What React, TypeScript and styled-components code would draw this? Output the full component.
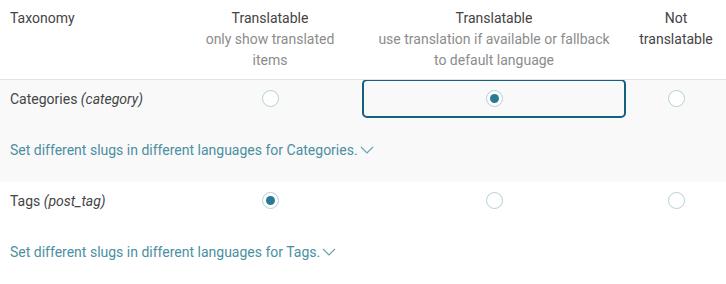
import styled, { createGlobalStyle } from 'styled-components';

const GlobalStyle = createGlobalStyle`
  html, body {
    margin: 0;
    padding: 0;
    background: #fff;
  }
  body {
    font-family: Roboto, "Liberation Sans", sans-serif;
    font-size: 14px;
    color: #444;
  }
`;

const Table = styled.table`
  width: 726px;
  border-collapse: collapse;
  table-layout: fixed;
`;

const Col = styled.col<{ $width: number }>`
  width: ${(p) => p.$width}px;
`;

const HeadCell = styled.th<{ $align?: 'left' | 'center' }>`
  padding: 8px 10px 8px;
  text-align: ${(p) => p.$align || 'center'};
  vertical-align: top;
  font-weight: 400;
  font-size: 14px;
  line-height: 21px;
  color: #444;
  border-bottom: 1px solid #e4e4e4;
`;

const Sub = styled.span`
  display: block;
  color: #8c8c8c;
`;

const Section = styled.tbody<{ $shaded?: boolean }>`
  background: ${(p) => (p.$shaded ? '#f9f9f9' : '#fff')};
`;

const NameCell = styled.td`
  height: 38px;
  padding: 0 10px;
  vertical-align: middle;
  line-height: 21px;
  color: #444;

  em {
    font-style: italic;
  }
`;

const RadioCell = styled.td`
  padding: 0;
  height: 38px;
  text-align: center;
  vertical-align: middle;
`;

const Focus = styled.label<{ $focused?: boolean }>`
  display: flex;
  align-items: center;
  justify-content: center;
  height: 39px;
  margin-top: -1px;
  box-sizing: border-box;
  border: 2px solid ${(p) => (p.$focused ? '#13607f' : 'transparent')};
  border-radius: 5px;
`;

const Radio = styled.span<{ $checked?: boolean }>`
  width: 17px;
  height: 17px;
  box-sizing: border-box;
  border-radius: 50%;
  border: 1px solid #b3cfd4;
  background: #fff;
  display: inline-flex;
  align-items: center;
  justify-content: center;

  &::after {
    content: '';
    width: 9px;
    height: 9px;
    border-radius: 50%;
    background: ${(p) => (p.$checked ? '#2b7a93' : 'transparent')};
  }
`;

const LinkCell = styled.td`
  height: 64px;
  padding: 0 10px;
  vertical-align: middle;
`;

const SlugLink = styled.a`
  color: #4a8fa2;
  text-decoration: none;
  font-size: 14px;
  line-height: 21px;
  display: inline-flex;
  align-items: center;
  gap: 2px;
`;

const Chevron = () => (
  <svg width="14" height="8" viewBox="0 0 14 8" fill="none">
    <path d="M1 1l6 6 6-6" stroke="#6aa2b2" strokeWidth="1.2" />
  </svg>
);

type Row = {
  label: string;
  slug: string;
  choice: number;
  focused?: number;
  shaded?: boolean;
};

const rows: Row[] = [
  { label: 'Categories', slug: 'category', choice: 1, focused: 1, shaded: true },
  { label: 'Tags', slug: 'post_tag', choice: 0 },
];

export default function App() {
  return (
    <>
      <GlobalStyle />
      <Table>
        <colgroup>
          <Col $width={178} />
          <Col $width={184} />
          <Col $width={264} />
          <Col $width={100} />
        </colgroup>
        <thead>
          <tr>
            <HeadCell $align="left">Taxonomy</HeadCell>
            <HeadCell>
              Translatable
              <Sub>only show translated items</Sub>
            </HeadCell>
            <HeadCell>
              Translatable
              <Sub>use translation if available or fallback to default language</Sub>
            </HeadCell>
            <HeadCell>Not translatable</HeadCell>
          </tr>
        </thead>
        {rows.map((row) => (
          <Section key={row.slug} $shaded={row.shaded}>
            <tr>
              <NameCell>
                {row.label} <em>({row.slug})</em>
              </NameCell>
              {[0, 1, 2].map((i) => (
                <RadioCell key={i}>
                  <Focus $focused={row.focused === i}>
                    <Radio $checked={row.choice === i} />
                  </Focus>
                </RadioCell>
              ))}
            </tr>
            <tr>
              <LinkCell colSpan={4}>
                <SlugLink href="#">
                  Set different slugs in different languages for {row.label}.
                  <Chevron />
                </SlugLink>
              </LinkCell>
            </tr>
          </Section>
        ))}
      </Table>
    </>
  );
}
